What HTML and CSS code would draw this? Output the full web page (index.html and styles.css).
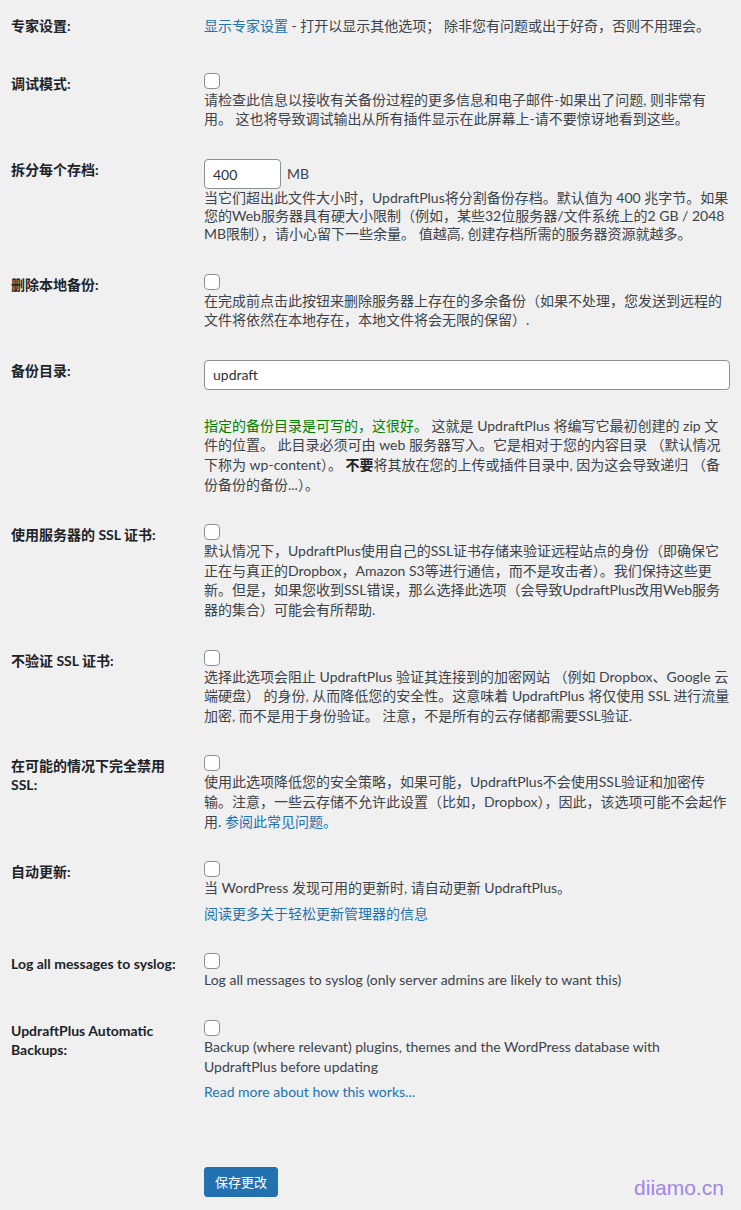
FILE: index.html
```html
<!DOCTYPE html>
<html lang="zh-CN">
<head>
    <meta charset="UTF-8">
    <meta name="viewport" content="width=device-width, initial-scale=1.0">
    <title>UpdraftPlus 设置</title>
    <link rel="stylesheet" href="styles.css">
</head>
<body>
    <div class="wrap">
        <table class="form-table">
            <tr>
                <th>专家设置:</th>
                <td class="plain"><a href="#">显示专家设置</a> - 打开以显示其他选项； 除非您有问题或出于好奇，否则不用理会。</td>
            </tr>
            <tr>
                <th><label for="debug">调试模式:</label></th>
                <td>
                    <input type="checkbox" id="debug">
                    <p class="description">请检查此信息以接收有关备份过程的更多信息和电子邮件-如果出了问题, 则非常有用。 这也将导致调试输出从所有插件显示在此屏幕上-请不要惊讶地看到这些。</p>
                </td>
            </tr>
            <tr>
                <th><label for="split">拆分每个存档:</label></th>
                <td>
                    <div class="size-line">
                        <input type="text" id="split" class="small-text" value="400"> MB
                    </div>
                    <p class="description tight">当它们超出此文件大小时，UpdraftPlus将分割备份存档。默认值为 400 兆字节。如果您的Web服务器具有硬大小限制（例如，某些32位服务器/文件系统上的2 GB / 2048 MB限制），请小心留下一些余量。 值越高, 创建存档所需的服务器资源就越多。</p>
                </td>
            </tr>
            <tr>
                <th><label for="delete-local">删除本地备份:</label></th>
                <td>
                    <input type="checkbox" id="delete-local">
                    <p class="description">在完成前点击此按钮来删除服务器上存在的多余备份（如果不处理，您发送到远程的文件将依然在本地存在，本地文件将会无限的保留）.</p>
                </td>
            </tr>
            <tr>
                <th><label for="dir">备份目录:</label></th>
                <td>
                    <input type="text" id="dir" class="regular-text" value="updraft">
                    <p class="description dir-status"><span class="ok">指定的备份目录是可写的，这很好。</span> 这就是 UpdraftPlus 将编写它最初创建的 zip 文件的位置。 此目录必须可由 web 服务器写入。它是相对于您的内容目录 （默认情况下称为 wp-content）。 <b>不要</b>将其放在您的上传或插件目录中, 因为这会导致递归 （备份备份的备份...）。</p>
                </td>
            </tr>
            <tr>
                <th><label for="ssl-server">使用服务器的 SSL 证书:</label></th>
                <td>
                    <input type="checkbox" id="ssl-server">
                    <p class="description">默认情况下，UpdraftPlus使用自己的SSL证书存储来验证远程站点的身份（即确保它正在与真正的Dropbox，Amazon S3等进行通信，而不是攻击者）。我们保持这些更新。但是，如果您收到SSL错误，那么选择此选项（会导致UpdraftPlus改用Web服务器的集合）可能会有所帮助.</p>
                </td>
            </tr>
            <tr>
                <th><label for="ssl-noverify">不验证 SSL 证书:</label></th>
                <td>
                    <input type="checkbox" id="ssl-noverify">
                    <p class="description">选择此选项会阻止 UpdraftPlus 验证其连接到的加密网站 （例如 Dropbox、Google 云端硬盘） 的身份, 从而降低您的安全性。这意味着 UpdraftPlus 将仅使用 SSL 进行流量加密, 而不是用于身份验证。 注意，不是所有的云存储都需要SSL验证.</p>
                </td>
            </tr>
            <tr>
                <th><label for="ssl-off">在可能的情况下完全禁用 SSL:</label></th>
                <td>
                    <input type="checkbox" id="ssl-off">
                    <p class="description">使用此选项降低您的安全策略，如果可能，UpdraftPlus不会使用SSL验证和加密传输。注意，一些云存储不允许此设置（比如，Dropbox），因此，该选项可能不会起作用. <a href="#">参阅此常见问题。</a></p>
                </td>
            </tr>
            <tr>
                <th><label for="auto-update">自动更新:</label></th>
                <td>
                    <input type="checkbox" id="auto-update">
                    <p class="description">当 WordPress 发现可用的更新时, 请自动更新 UpdraftPlus。</p>
                    <p class="more"><a href="#">阅读更多关于轻松更新管理器的信息</a></p>
                </td>
            </tr>
            <tr>
                <th><label for="syslog">Log all messages to syslog:</label></th>
                <td>
                    <input type="checkbox" id="syslog">
                    <p class="description">Log all messages to syslog (only server admins are likely to want this)</p>
                </td>
            </tr>
            <tr>
                <th><label for="auto-backup">UpdraftPlus Automatic Backups:</label></th>
                <td>
                    <input type="checkbox" id="auto-backup">
                    <p class="description">Backup (where relevant) plugins, themes and the WordPress database with UpdraftPlus before updating</p>
                    <p class="more"><a href="#">Read more about how this works...</a></p>
                </td>
            </tr>
        </table>

        <p class="submit">
            <button class="button-primary">保存更改</button>
            <span class="watermark">diiamo.cn</span>
        </p>
    </div>
</body>
</html>
```

FILE: styles.css
```css
body {
    font-family: Lato, "Noto Sans CJK SC", sans-serif;
    font-size: 14px;
    color: #3c434a;
    background: #f0f0f1;
    margin: 0;
    padding: 0;
}
a {
    color: #2271b1;
    text-decoration: none;
}
.form-table {
    width: 100%;
    border-collapse: collapse;
    table-layout: fixed;
}
.form-table th {
    width: 183px;
    padding: 17px 10px 22px 11px;
    text-align: left;
    vertical-align: top;
    font-weight: 700;
    line-height: 1.35;
    color: #1d2327;
}
.form-table td {
    padding: 15px 11px 15px 0;
    vertical-align: top;
    line-height: 1.4;
}
.form-table td.plain {
    padding-top: 16px;
}
input[type="checkbox"] {
    appearance: none;
    -webkit-appearance: none;
    display: block;
    width: 16px;
    height: 16px;
    margin: 0;
    background: #fff;
    border: 1px solid #8c8f94;
    border-radius: 4px;
}
input[type="text"] {
    box-sizing: border-box;
    height: 30px;
    padding: 0 8px;
    font-family: inherit;
    font-size: 14px;
    color: #2c3338;
    background: #fff;
    border: 1px solid #8c8f94;
    border-radius: 4px;
}
.small-text {
    width: 77px;
}
.regular-text {
    display: block;
    width: 100%;
}
.size-line {
    display: flex;
    align-items: center;
    gap: 6px;
}
.description {
    margin: 1px 0 0;
}
.description.tight {
    margin-top: 0;
    line-height: 1.3;
}
.dir-status {
    margin-top: 26px;
}
.ok {
    color: #008000;
}
.description b {
    color: #1d2327;
}
.more {
    margin: 6px 0 0;
}
.submit {
    position: relative;
    margin: 0;
    padding: 50px 0 13px 204px;
}
.button-primary {
    height: 30px;
    padding: 0 10px;
    font-family: inherit;
    font-size: 13px;
    color: #fff;
    background: #2271b1;
    border: 1px solid #2271b1;
    border-radius: 3px;
    cursor: pointer;
}
.watermark {
    position: absolute;
    right: 17px;
    bottom: 10px;
    font-family: "Liberation Sans", Arial, sans-serif;
    font-size: 21px;
    color: #a084e8;
}
```
